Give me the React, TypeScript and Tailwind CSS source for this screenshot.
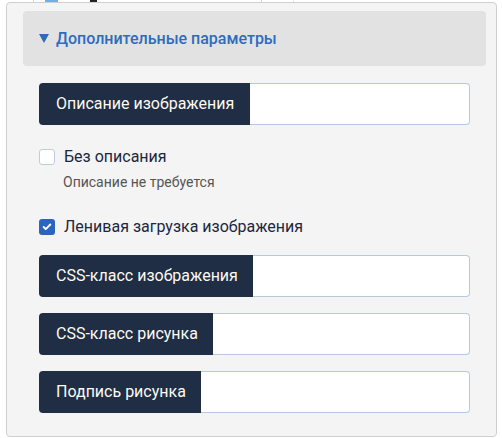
import { Check } from "lucide-react";

const font = { fontFamily: "Roboto, 'Noto Sans', sans-serif" };

function Field({ label, labelW }: { label: string; labelW: string }) {
  return (
    <div className="flex h-[42px]">
      <div
        className={`${labelW} shrink-0 flex items-center pl-[17px] bg-[#1f2d45] text-[#fdfaf0] text-base rounded-l-[4px]`}
      >
        {label}
      </div>
      <input
        type="text"
        className="flex-1 min-w-0 bg-white border border-[#b7c8e1] border-l-0 rounded-r-[4px] outline-none px-3"
      />
    </div>
  );
}

function CheckRow({ label, checked }: { label: string; checked?: boolean }) {
  return (
    <label className="flex items-center gap-[9px] h-[22px] text-base text-[#1c2740]">
      {checked ? (
        <span className="w-4 h-4 rounded-[3px] bg-[#2a65c0] flex items-center justify-center">
          <Check size={10} strokeWidth={4.5} className="text-white" />
        </span>
      ) : (
        <span className="w-4 h-4 rounded-[3px] bg-white border border-[#bfcce0]" />
      )}
      {label}
    </label>
  );
}

export default function App() {
  return (
    <div className="w-[502px] h-[438px] bg-white overflow-hidden" style={font}>
      {/* edge of the row above */}
      <div className="h-[2px] flex">
        <div className="w-[33px] bg-white" />
        <div className="w-px bg-[#d8d8d8]" />
        <div className="w-[11px]" />
        <div className="w-[13px] bg-[#6fb3e0]" />
        <div className="w-[32px]" />
        <div className="w-[7px] bg-[#222]" />
        <div className="w-[164px]" />
        <div className="w-px bg-[#d8d8d8]" />
        <div className="w-[31px]" />
        <div className="w-px bg-[#e6e6e6]" />
      </div>
      <div className="ml-[6px] w-[491px] h-[435px] bg-[#f4f4f4] border border-[#cfcfcf] rounded-[4px] pl-4 pr-[10px] pt-2">
        <div className="h-[55px] bg-[#e2e2e2] rounded-[4px] flex items-center pl-4 text-[#2e6bc0] text-base font-medium">
          <svg width="10" height="9" viewBox="0 0 10 9" className="mr-[7px]">
            <path d="M0 0h10L5 9z" fill="#2e6bc0" />
          </svg>
          Дополнительные параметры
        </div>
        <div className="px-4 pt-[17px] flex flex-col">
          <Field label="Описание изображения" labelW="w-[211px]" />
          <div className="mt-[21px]">
            <CheckRow label="Без описания" />
          </div>
          <div className="ml-[24px] mt-[5px] text-sm text-[#555] leading-[18px]">
            Описание не требуется
          </div>
          <div className="mt-[25px]">
            <CheckRow label="Ленивая загрузка изображения" checked />
          </div>
          <div className="mt-[17px] flex flex-col gap-4">
            <Field label="CSS-класс изображения" labelW="w-[214px]" />
            <Field label="CSS-класс рисунка" labelW="w-[174px]" />
            <Field label="Подпись рисунка" labelW="w-[162px]" />
          </div>
        </div>
      </div>
    </div>
  );
}
